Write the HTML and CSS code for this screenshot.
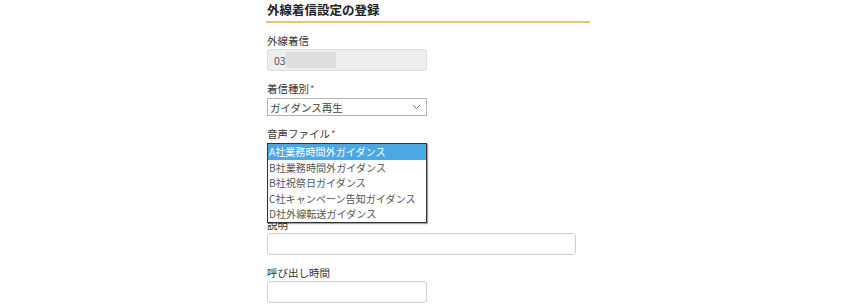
FILE: index.html
```html
<!DOCTYPE html>
<html lang="ja">
<head>
  <meta charset="utf-8">
  <meta name="viewport" content="width=device-width, initial-scale=1">
  <link rel="stylesheet" href="styles.css">
  <title>外線着信設定の登録</title>
</head>
<body>
  <div id="form_div">
    <!-- Heading -->
    <h1 class="form_title">外線着信設定の登録</h1>

    <div class="field">
      <label class="field_label">外線着信</label>
      <div class="text_input disabled">
        <span>03</span><span class="masked"></span>
      </div>
    </div>

    <div class="field">
      <label class="field_label">着信種別<span class="req">*</span></label>
      <div class="select_box">
        <span>ガイダンス再生</span>
        <svg class="chevron" width="9" height="6" viewBox="0 0 9 6"><path d="M1 1 L4.5 4.5 L8 1" fill="none" stroke="#777" stroke-width="1"/></svg>
      </div>
    </div>

    <div class="field">
      <label class="field_label">音声ファイル<span class="req">*</span></label>
      <div class="dropdown_wrap">
        <!-- open dropdown of the select -->
        <ul class="listbox">
          <li class="selected">A社業務時間外ガイダンス</li>
          <li>B社業務時間外ガイダンス</li>
          <li>B社祝祭日ガイダンス</li>
          <li>C社キャンペーン告知ガイダンス</li>
          <li>D社外線転送ガイダンス</li>
        </ul>
      </div>
    </div>

    <div class="field">
      <label class="field_label">説明</label>
      <div class="text_input wide"></div>
    </div>

    <div class="field">
      <label class="field_label">呼び出し時間</label>
      <div class="text_input"></div>
    </div>
  </div>
</body>
</html>
```

FILE: styles.css
```css
body {
  margin: 0px;
  background-color: white;
  color: #333;
  font-family: "Noto Sans CJK JP", "Noto Sans", sans-serif;
  font-size: 10.5px;
}

#form_div {
  margin-left: 266px;
  width: 324px;
}

.form_title {
  margin: 0px;
  padding: 0px 0px 1px 1px;
  font-size: 12.5px;
  font-weight: bold;
  line-height: 20px;
  color: #222;
  border-bottom: 2px solid #e8c66c;
}

.field {
  margin-top: 10px;
  padding-left: 1px;
}

.field_label {
  display: block;
  line-height: 16px;
  height: 16px;
  color: #333;
}

.req {
  color: #e0393e;
  font-size: 10px;
  vertical-align: top;
  margin-left: 1px;
}

.text_input {
  box-sizing: border-box;
  width: 160px;
  height: 22px;
  border: 1px solid #cfcfcf;
  border-radius: 3px;
  background-color: white;
  display: flex;
  align-items: center;
  padding-left: 6px;
  color: #555;
}

.text_input.wide {
  width: 309px;
}

.text_input.disabled {
  background-color: #eeeeee;
  border-color: #dcdcdc;
}

.masked {
  display: inline-block;
  width: 50px;
  height: 16px;
  background-color: #dedede;
}

.select_box {
  box-sizing: border-box;
  width: 160px;
  height: 18px;
  margin-top: 1px;
  border: 1px solid #b4b4b4;
  display: flex;
  align-items: center;
  justify-content: space-between;
  padding: 0px 5px 0px 2px;
  color: #444;
}

.dropdown_wrap {
  position: relative;
  height: 65px;
}

.listbox {
  position: absolute;
  top: 1px;
  left: 0px;
  z-index: 2;
  box-sizing: border-box;
  width: 160px;
  margin: 0px;
  padding: 0px;
  list-style: none;
  border: 1px solid #333;
  background-color: white;
  box-shadow: 1px 1px 1px rgba(0, 0, 0, 0.35);
  font-size: 10.1px;
}

.listbox li {
  height: 15.5px;
  line-height: 15.5px;
  padding-left: 1px;
  color: #555;
  white-space: nowrap;
}

.listbox li.selected {
  background-color: #4aa9e2;
  color: white;
}
```
